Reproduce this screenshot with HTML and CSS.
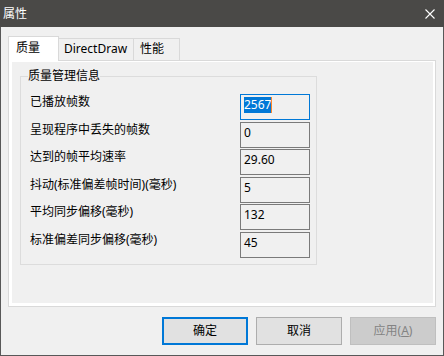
FILE: index.html
```html
<!DOCTYPE html>
<html lang="zh-CN">
<head>
    <meta charset="UTF-8">
    <title>属性</title>
    <link rel="stylesheet" href="styles.css">
</head>
<body>
    <div class="window">
        <div class="titlebar">
            <span class="title">属性</span>
            <svg class="close" width="10" height="10" viewBox="0 0 10 10">
                <path d="M0.5 0.5 L9.5 9.5 M9.5 0.5 L0.5 9.5" stroke="#ffffff" stroke-width="1.1" fill="none"/>
            </svg>
        </div>
        <div class="body">
            <div class="tabs">
                <div class="tab active">质量</div>
                <div class="tab">DirectDraw</div>
                <div class="tab">性能</div>
            </div>
            <div class="pane">
                <div class="page">
                    <fieldset class="group">
                        <legend>质量管理信息</legend>
                        <div class="rows">
                            <span class="label">已播放帧数</span>
                            <div class="edit focused"><span class="sel">2567</span><span class="caret"></span></div>

                            <span class="label">呈现程序中丢失的帧数</span>
                            <div class="edit">0</div>

                            <span class="label">达到的帧平均速率</span>
                            <div class="edit">29.60</div>

                            <span class="label">抖动(标准偏差帧时间)(毫秒)</span>
                            <div class="edit">5</div>

                            <span class="label">平均同步偏移(毫秒)</span>
                            <div class="edit">132</div>

                            <span class="label">标准偏差同步偏移(毫秒)</span>
                            <div class="edit">45</div>
                        </div>
                    </fieldset>
                </div>
            </div>
            <div class="buttons">
                <div class="btn default">确定</div>
                <div class="btn">取消</div>
                <div class="btn disabled">应用(<u>A</u>)</div>
            </div>
        </div>
    </div>
</body>
</html>
```

FILE: styles.css
```css
html, body {
    margin: 0;
    padding: 0;
}
body {
    background-color: #f0f0f0;
    font-family: "Noto Sans", "Noto Sans CJK SC", sans-serif;
    font-size: 12px;
    line-height: 16px;
    color: #000;
}
.window {
    width: 444px;
    height: 356px;
    box-sizing: border-box;
    border: 1px solid #585858;
    border-top: none;
    display: flex;
    flex-direction: column;
}
.titlebar {
    height: 27px;
    flex-shrink: 0;
    background-color: #4a4947;
    color: #fff;
    display: flex;
    align-items: center;
    justify-content: space-between;
    padding: 0 9px 0 3px;
    margin: 0 -1px;
}
.close {
    display: block;
    margin-top: 1px;
}
.body {
    flex: 1;
    display: flex;
    flex-direction: column;
    padding: 9px 7px 10px 7px;
    min-height: 0;
}
.tabs {
    display: flex;
    align-items: flex-end;
    height: 24px;
    flex-shrink: 0;
}
.tab {
    box-sizing: border-box;
    height: 22px;
    border-top: 1px solid #d9d9d9;
    border-right: 1px solid #d9d9d9;
    background-color: #f0f0f0;
    padding-top: 2px;
    white-space: nowrap;
}
.tab.active {
    height: 25px;
    width: 51px;
    margin-bottom: -1px;
    border-left: 1px solid #d9d9d9;
    background-color: #fff;
    padding: 3px 0 0 7px;
    position: relative;
    z-index: 1;
}
.tab:nth-child(2) {
    width: 75px;
    padding-left: 5px;
}
.tab:nth-child(3) {
    width: 46px;
    padding-left: 6px;
}
.pane {
    flex: 1;
    display: flex;
    border: 1px solid #d9d9d9;
    background-color: #fff;
    padding: 1px 2px 3px 3px;
}
.page {
    flex: 1;
    background-color: #f0f0f0;
}
.group {
    margin: 6px 0 0 8px;
    width: 297px;
    box-sizing: border-box;
    border: 1px solid #dcdcdc;
    padding: 10px 6px 6px 7px;
    min-width: 0;
}
.group legend {
    padding: 0;
    line-height: 16px;
}
.rows {
    display: grid;
    grid-template-columns: 1fr 70px;
    row-gap: 1.6px;
    align-items: start;
}
.label {
    padding-left: 2px;
    white-space: nowrap;
}
.edit {
    height: 26px;
    box-sizing: border-box;
    border: 1px solid #7a7a7a;
    padding: 2px 3px;
    background-color: #f0f0f0;
}
.edit.focused {
    border-color: #0078d7;
    display: flex;
    align-items: flex-start;
}
.sel {
    background-color: #0078d7;
    color: #fff;
}
.caret {
    width: 1px;
    height: 16px;
    background-color: #ff8728;
}
.buttons {
    display: flex;
    justify-content: flex-end;
    gap: 8px;
    margin-top: 10px;
    flex-shrink: 0;
}
.btn {
    width: 86px;
    height: 28px;
    box-sizing: border-box;
    border: 1px solid #adadad;
    background-color: #e1e1e1;
    display: flex;
    align-items: center;
    justify-content: center;
}
.btn.default {
    border: 2px solid #0078d7;
}
.btn.disabled {
    background-color: #cccccc;
    border-color: #bfbfbf;
    color: #838383;
}
```
